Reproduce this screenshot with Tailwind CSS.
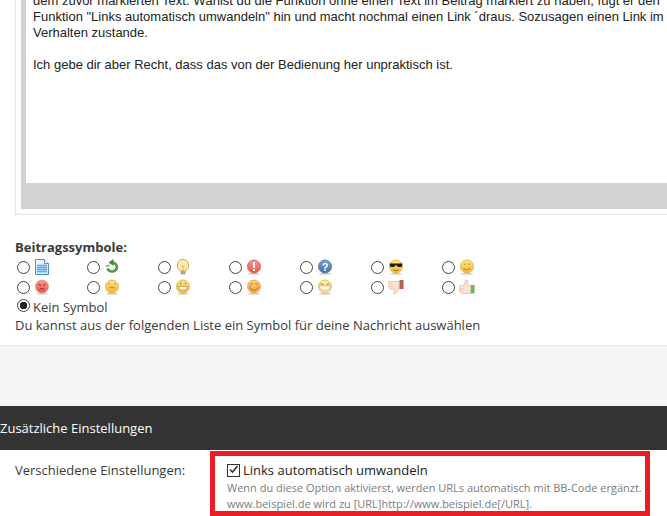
<!DOCTYPE html>
<html lang="de">
<head>
<meta charset="UTF-8">
<title>Beitrag</title>
<script src="https://cdn.jsdelivr.net/npm/@tailwindcss/browser@4"></script>
</head>
<body class="bg-white overflow-hidden h-[516px] font-['Open_Sans',sans-serif] text-[13px] text-[#3a3a3a]">
  <svg class="absolute size-0" aria-hidden="true">
    <defs>
      <linearGradient id="yel" x1="0" y1="0" x2="0" y2="1"><stop offset="0" stop-color="#fde68a"/><stop offset="1" stop-color="#f4bb30"/></linearGradient>
      <linearGradient id="org" x1="0" y1="0" x2="0" y2="1"><stop offset="0" stop-color="#fcd27a"/><stop offset="1" stop-color="#f4a93a"/></linearGradient>
      <linearGradient id="red" x1="0" y1="0" x2="0" y2="1"><stop offset="0" stop-color="#f59a8e"/><stop offset="1" stop-color="#e2574c"/></linearGradient>
      <linearGradient id="blu" x1="0" y1="0" x2="0" y2="1"><stop offset="0" stop-color="#7fa5d6"/><stop offset="1" stop-color="#3f6cab"/></linearGradient>
      <linearGradient id="doc" x1="0" y1="0" x2="0" y2="1"><stop offset="0" stop-color="#f2f8fe"/><stop offset="1" stop-color="#cfe4f9"/></linearGradient>
    </defs>
  </svg>

  <!-- Editor -->
  <div class="h-[346px] border-b border-[#e6e6e6]">
    <div class="ml-[15px] h-[215px] border-l border-b border-[#e4e4e4] pl-[5px] pb-[5px]">
      <div class="h-[209px] bg-[#d2d2d2] pl-[5px]">
        <div class="h-[183px] bg-white pl-[7px] font-['Liberation_Sans',sans-serif] text-[13px] leading-[16px] text-[#222] whitespace-nowrap overflow-hidden">
          <p class="-mt-[7px]">dem zuvor markierten Text. Wählst du die Funktion ohne einen Text im Beitrag markiert zu haben, fügt er den</p>
          <p>Funktion "Links automatisch umwandeln" hin und macht nochmal einen Link ´draus. Sozusagen einen Link im</p>
          <p>Verhalten zustande.</p>
          <p class="mt-[16px]">Ich gebe dir aber Recht, dass das von der Bedienung her unpraktisch ist.</p>
        </div>
      </div>
    </div>

    <!-- Symbols -->
    <div class="pl-[15px] pt-[23px]">
      <h3 class="font-bold leading-[18px] text-[13px]">Beitragssymbole:</h3>
      <div class="grid grid-cols-[70px_71px_71px_71px_71px_71px_71px] auto-rows-[20px] h-[40px] mt-[1px]">
        <label class="flex items-center gap-[4px]"><input type="radio" name="s" class="appearance-none size-[13px] ml-[2px] rounded-full border border-[#444] bg-white"><svg class="size-[16px]" viewBox="0 0 16 16"><path d="M1.500.5h9l4 4v11h-13z" fill="url(#doc)" stroke="#4d8fd0"/><path d="M10.500.5v4h4" fill="#fff" stroke="#4d8fd0"/><path d="M3 6.500h10M3 8.500h10M3 10.500h10M3 12.500h10" stroke="#62aaea" stroke-width="1.300"/></svg></label>
        <label class="flex items-center gap-[4px]"><input type="radio" name="s" class="appearance-none size-[13px] ml-[2px] rounded-full border border-[#444] bg-white"><svg class="size-[16px]" viewBox="0 0 16 16"><path d="M3.500 9.500a5 5 0 0 0 9.500-1 5 5 0 0 0-5.500-5" fill="none" stroke="#4b9b3d" stroke-width="2.600"/><path d="M9.500 0v7L4.500 3.500z" fill="#3f8a35"/><path d="M2 7.500l3.500-1.500" stroke="#6cbb5a" stroke-width="1.500"/></svg></label>
        <label class="flex items-center gap-[4px]"><input type="radio" name="s" class="appearance-none size-[13px] ml-[2px] rounded-full border border-[#444] bg-white"><svg class="size-[16px]" viewBox="0 0 16 16"><path d="M8 .5a5.800 5.800 0 0 1 3 10.700V12H5v-.8A5.800 5.800 0 0 1 8 .5z" fill="#fdeeb0" stroke="#dca544"/><path d="M6.500 6l1.500 2 1.500-2M8 8v4" stroke="#e3a53c" fill="none" stroke-width=".8"/><rect x="5.500" y="12" width="5" height="3.500" rx="1" fill="#a8a89a"/></svg></label>
        <label class="flex items-center gap-[4px]"><input type="radio" name="s" class="appearance-none size-[13px] ml-[2px] rounded-full border border-[#444] bg-white"><svg class="size-[16px]" viewBox="0 0 16 16"><ellipse cx="8" cy="14.800" rx="6" ry="1" fill="#999" opacity=".45"/><circle cx="8" cy="7.500" r="6.500" fill="url(#red)" stroke="#c8564c" stroke-width=".8"/><rect x="7" y="3" width="2" height="6" rx=".6" fill="#fff"/><rect x="7" y="10" width="2" height="2" rx=".6" fill="#fff"/></svg></label>
        <label class="flex items-center gap-[4px]"><input type="radio" name="s" class="appearance-none size-[13px] ml-[2px] rounded-full border border-[#444] bg-white"><svg class="size-[16px]" viewBox="0 0 16 16"><ellipse cx="8" cy="14.800" rx="6" ry="1" fill="#999" opacity=".45"/><circle cx="8" cy="7.500" r="6.500" fill="url(#blu)" stroke="#4a6f9f" stroke-width=".8"/><text x="8" y="11.500" text-anchor="middle" font-size="11" font-weight="700" fill="#fff" font-family="Liberation Sans">?</text></svg></label>
        <label class="flex items-center gap-[4px]"><input type="radio" name="s" class="appearance-none size-[13px] ml-[2px] rounded-full border border-[#444] bg-white"><svg class="size-[16px]" viewBox="0 0 16 16"><ellipse cx="8" cy="14.800" rx="6" ry="1" fill="#999" opacity=".45"/><circle cx="8" cy="7.500" r="6.500" fill="url(#yel)" stroke="#d9a93c" stroke-width=".8"/><path d="M1.500 4.500h13l-1 3.500h-3.500L8 6l-2 2H2.500z" fill="#1e1e1e"/><path d="M5 10.500c2 1.500 4 1.500 6 0" stroke="#8a6a20" fill="none"/></svg></label>
        <label class="flex items-center gap-[4px]"><input type="radio" name="s" class="appearance-none size-[13px] ml-[2px] rounded-full border border-[#444] bg-white"><svg class="size-[16px]" viewBox="0 0 16 16"><ellipse cx="8" cy="14.800" rx="6" ry="1" fill="#999" opacity=".45"/><circle cx="8" cy="7.500" r="6.500" fill="url(#yel)" stroke="#d9a93c" stroke-width=".8"/><path d="M4.500 9c2 2.500 5 2.500 7 0" stroke="#a5802a" fill="none"/><path d="M6 4.500v1.500M10 4.500v1.500" stroke="#a5802a"/></svg></label>

        <label class="flex items-center gap-[4px]"><input type="radio" name="s" class="appearance-none size-[13px] ml-[2px] rounded-full border border-[#444] bg-white"><svg class="size-[16px]" viewBox="0 0 16 16"><ellipse cx="8" cy="14.800" rx="6" ry="1" fill="#999" opacity=".4"/><circle cx="8" cy="7.500" r="6.500" fill="url(#red)" stroke="#e58a80" stroke-width=".8"/><path d="M4.500 5l2.500 1.500M11.500 5L9 6.500M5.500 10.500c1.500-1.500 3.500-1.500 5 0" stroke="#a02c25" fill="none"/></svg></label>
        <label class="flex items-center gap-[4px]"><input type="radio" name="s" class="appearance-none size-[13px] ml-[2px] rounded-full border border-[#444] bg-white"><svg class="size-[16px]" viewBox="0 0 16 16"><ellipse cx="8" cy="14.800" rx="6" ry="1" fill="#999" opacity=".45"/><circle cx="8" cy="7.500" r="6.500" fill="url(#yel)" stroke="#d9a93c" stroke-width=".8"/><path d="M5 9.500c2-2 4-2 6 0M4.500 5.500l1.500-1M11.500 5.500L10 4.500" stroke="#a5802a" fill="none"/></svg></label>
        <label class="flex items-center gap-[4px]"><input type="radio" name="s" class="appearance-none size-[13px] ml-[2px] rounded-full border border-[#444] bg-white"><svg class="size-[16px]" viewBox="0 0 16 16"><ellipse cx="8" cy="14.800" rx="6" ry="1" fill="#999" opacity=".45"/><circle cx="8" cy="7.500" r="6.500" fill="url(#yel)" stroke="#d9a93c" stroke-width=".8"/><path d="M3.500 7.500h9c0 5-9 5-9 0z" fill="#fff" stroke="#a5802a" stroke-width=".6"/><path d="M5.500 3.500v2M10.500 3.500v2" stroke="#a5802a"/></svg></label>
        <label class="flex items-center gap-[4px]"><input type="radio" name="s" class="appearance-none size-[13px] ml-[2px] rounded-full border border-[#444] bg-white"><svg class="size-[16px]" viewBox="0 0 16 16"><ellipse cx="8" cy="14.800" rx="6" ry="1" fill="#999" opacity=".45"/><circle cx="8" cy="7.500" r="6.500" fill="url(#org)" stroke="#e09a34" stroke-width=".8"/><path d="M4.500 9c2 3 5 3 7 0M4.500 5.500l2-1M11.500 5.500l-2-1" stroke="#b0642a" fill="none"/><circle cx="3.800" cy="8" r="1.300" fill="#ef8a6a"/><circle cx="12.200" cy="8" r="1.300" fill="#ef8a6a"/></svg></label>
        <label class="flex items-center gap-[4px]"><input type="radio" name="s" class="appearance-none size-[13px] ml-[2px] rounded-full border border-[#444] bg-white"><svg class="size-[16px]" viewBox="0 0 16 16"><ellipse cx="8" cy="14.800" rx="6" ry="1" fill="#999" opacity=".45"/><circle cx="8" cy="7.500" r="6.500" fill="#fde9a0" stroke="#e0b040" stroke-width=".8"/><path d="M2.500 7h11c0 6-11 6-11 0z" fill="#fff" stroke="#c49a3a" stroke-width=".6"/><path d="M3.500 5l3 .5M12.500 5l-3 .5" stroke="#a5802a"/></svg></label>
        <label class="flex items-center gap-[4px]"><input type="radio" name="s" class="appearance-none size-[13px] ml-[2px] rounded-full border border-[#444] bg-white"><svg class="size-[16px]" viewBox="0 0 16 16"><path d="M.8 2.500h10v6.500l-3.300 6-1.700-.5.500-4.500H2L.8 8.500z" fill="#fde3d6" stroke="#eeb8a2" stroke-width=".8"/><path d="M1 5h4M1 7.500h4" stroke="#eeb8a2" stroke-width=".6"/><rect x="11.500" y="1" width="4" height="9" fill="#b8604e"/></svg></label>
        <label class="flex items-center gap-[4px]"><input type="radio" name="s" class="appearance-none size-[13px] ml-[2px] rounded-full border border-[#444] bg-white"><svg class="size-[16px]" viewBox="0 0 16 16"><path d="M.8 7h3.700L6.800 1l1.700.5-.5 4.500h3.500v8.500H3L.8 12.500z" fill="#fde3d6" stroke="#eeb8a2" stroke-width=".8"/><path d="M1 9.500h4M1 12h4" stroke="#eeb8a2" stroke-width=".6"/><rect x="12" y="6" width="3.500" height="8.500" fill="#6ab85e"/></svg></label>
      </div>
      <label class="flex items-start gap-[3px] h-[19px] ml-[2px]"><input type="radio" name="s" checked class="appearance-none size-[13px] mt-[2px] shrink-0 rounded-full border border-[#444] bg-[radial-gradient(circle,#222_3.5px,#fff_4px)]"><span class="leading-[18px] pt-[1px]">Kein Symbol</span></label>
      <p class="leading-[18px]">Du kannst aus der folgenden Liste ein Symbol für deine Nachricht auswählen</p>
    </div>
  </div>

  <!-- Spacer -->
  <div class="h-[60px] bg-[#f5f5f5]"></div>

  <!-- Additional settings -->
  <div class="h-[44px] bg-[#333333] text-white flex items-center pt-[1px]">Zusätzliche Einstellungen</div>
  <div class="flex h-[66px] pl-[15px] pt-[1px] bg-white">
    <div class="w-[195px] pt-[10px] leading-[18px]">Verschiedene Einstellungen:</div>
    <div class="w-[440px] h-[65px] border-[5px] border-[#ed1c24] pl-[12px] pt-[5px]">
      <label class="relative flex items-center gap-[3px] h-[18px] leading-[18px] text-[13px] text-[#222]">
        <input type="checkbox" checked class="appearance-none size-[13px] shrink-0 border border-[#333] bg-white">
        <svg class="absolute left-0 top-[2px] size-[13px]" viewBox="0 0 13 13"><path d="M3 6.500l2.500 2.500L10.500 3" fill="none" stroke="#333" stroke-width="1.600"/></svg>
        <span>Links automatisch umwandeln</span>
      </label>
      <p class="text-[11px] leading-[16px] text-[#7b7b7b] mt-[1px] whitespace-nowrap">Wenn du diese Option aktivierst, werden URLs automatisch mit BB-Code ergänzt.</p>
      <p class="text-[11px] leading-[16px] text-[#7b7b7b]">www.beispiel.de wird zu [URL]http://www.beispiel.de[/URL].</p>
    </div>
  </div>
</body>
</html>
